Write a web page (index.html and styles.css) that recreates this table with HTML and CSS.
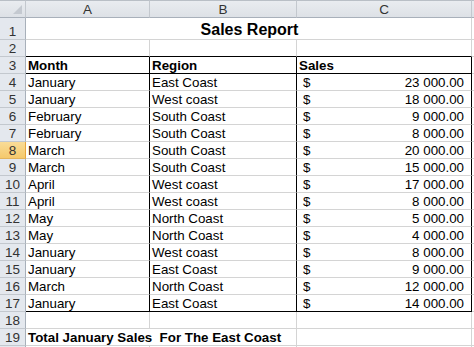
FILE: index.html
```html
<!DOCTYPE html>
<html>
<head>
<meta charset="utf-8">
<link rel="stylesheet" href="styles.css">
</head>
<body>
<div class="sheet">
  <div class="ch corner"><span class="tri"></span></div>
  <div class="ch">A</div>
  <div class="ch">B</div>
  <div class="ch">C</div>
  <div class="ch last"></div>

  <div class="rh r1">1</div>
  <div class="c r1 title span3">Sales Report</div>
  <div class="c r1 last"></div>

  <div class="rh">2</div>
  <div class="c bb"></div>
  <div class="c bb"></div>
  <div class="c bb"></div>
  <div class="c last"></div>

  <div class="rh">3</div>
  <div class="c b bb br">Month</div>
  <div class="c b bb br">Region</div>
  <div class="c b bb br">Sales</div>
  <div class="c last"></div>

  <div class="rh">4</div><div class="c br">January</div><div class="c br">East Coast</div><div class="c br money"><span>$</span><span>23 000.00</span></div><div class="c last"></div>
  <div class="rh">5</div><div class="c br">January</div><div class="c br">West coast</div><div class="c br money"><span>$</span><span>18 000.00</span></div><div class="c last"></div>
  <div class="rh">6</div><div class="c br">February</div><div class="c br">South Coast</div><div class="c br money"><span>$</span><span>9 000.00</span></div><div class="c last"></div>
  <div class="rh">7</div><div class="c br">February</div><div class="c br">South Coast</div><div class="c br money"><span>$</span><span>8 000.00</span></div><div class="c last"></div>
  <div class="rh sel">8</div><div class="c br">March</div><div class="c br">South Coast</div><div class="c br money"><span>$</span><span>20 000.00</span></div><div class="c last"></div>
  <div class="rh">9</div><div class="c br">March</div><div class="c br">South Coast</div><div class="c br money"><span>$</span><span>15 000.00</span></div><div class="c last"></div>
  <div class="rh">10</div><div class="c br">April</div><div class="c br">West coast</div><div class="c br money"><span>$</span><span>17 000.00</span></div><div class="c last"></div>
  <div class="rh">11</div><div class="c br">April</div><div class="c br">West coast</div><div class="c br money"><span>$</span><span>8 000.00</span></div><div class="c last"></div>
  <div class="rh">12</div><div class="c br">May</div><div class="c br">North Coast</div><div class="c br money"><span>$</span><span>5 000.00</span></div><div class="c last"></div>
  <div class="rh">13</div><div class="c br">May</div><div class="c br">North Coast</div><div class="c br money"><span>$</span><span>4 000.00</span></div><div class="c last"></div>
  <div class="rh">14</div><div class="c br">January</div><div class="c br">West coast</div><div class="c br money"><span>$</span><span>8 000.00</span></div><div class="c last"></div>
  <div class="rh">15</div><div class="c br">January</div><div class="c br">East Coast</div><div class="c br money"><span>$</span><span>9 000.00</span></div><div class="c last"></div>
  <div class="rh">16</div><div class="c br">March</div><div class="c br">North Coast</div><div class="c br money"><span>$</span><span>12 000.00</span></div><div class="c last"></div>
  <div class="rh">17</div><div class="c br bb">January</div><div class="c br bb">East Coast</div><div class="c br bb money"><span>$</span><span>14 000.00</span></div><div class="c last"></div>

  <div class="rh">18</div><div class="c"></div><div class="c"></div><div class="c"></div><div class="c last"></div>

  <div class="rh">19</div>
  <div class="c b span2">Total January Sales&nbsp; For The East Coast</div>
  <div class="c"></div>
  <div class="c last"></div>

  <div class="rh"></div><div class="c"></div><div class="c"></div><div class="c"></div><div class="c last"></div>
</div>
</body>
</html>
```

FILE: styles.css
```css
html, body {
  margin: 0;
  padding: 0;
  background: #ffffff;
}
body {
  width: 474px;
  height: 347px;
  overflow: hidden;
  font-family: "Liberation Sans", Arial, sans-serif;
  font-size: 13.33px;
  color: #000;
}
.sheet {
  display: grid;
  grid-template-columns: 26px 124px 147px 175px 2px;
  grid-template-rows: 18px 22px repeat(19, 17px);
}
.ch, .rh, .c {
  box-sizing: border-box;
  border-right: 1px solid #d4d4d4;
  border-bottom: 1px solid #d4d4d4;
  overflow: hidden;
  white-space: nowrap;
}
.ch {
  background: linear-gradient(#e9ecf0, #dde1e6);
  border-top: 1px solid #b9bfc6;
  border-right-color: #c3c8ce;
  border-bottom-color: #a8b0ba;
  color: #333;
  display: flex;
  align-items: center;
  justify-content: center;
  font-size: 13.5px;
  padding-top: 1px;
}
.corner {
  position: relative;
}
.tri {
  position: absolute;
  right: 3px;
  bottom: 3px;
  width: 0;
  height: 0;
  border-left: 9px solid transparent;
  border-bottom: 9px solid #c4c9d0;
}
.rh {
  background: #e4e8ee;
  border-right-color: #a8b0ba;
  border-bottom-color: #c3c8ce;
  color: #333;
  font-size: 13.5px;
  display: flex;
  align-items: flex-end;
  justify-content: center;
  line-height: 15px;
}
.rh.sel {
  background: linear-gradient(#f9dc97, #f5c96c);
  border-right-color: #e8a53a;
  border-bottom-color: #e3b45c;
}
.c {
  display: flex;
  align-items: flex-end;
  line-height: 15px;
  padding-left: 2px;
}
.last {
  border-right: none;
  padding: 0;
}
.title {
  justify-content: center;
  font-weight: bold;
  font-size: 16px;
  line-height: 19px;
}
.span3 {
  grid-column: span 3;
}
.span2 {
  grid-column: span 2;
}
.b {
  font-weight: bold;
}
.bb {
  border-bottom-color: #000;
}
.br {
  border-right-color: #000;
}
.money {
  justify-content: space-between;
  padding-left: 6px;
  padding-right: 7px;
}
```
